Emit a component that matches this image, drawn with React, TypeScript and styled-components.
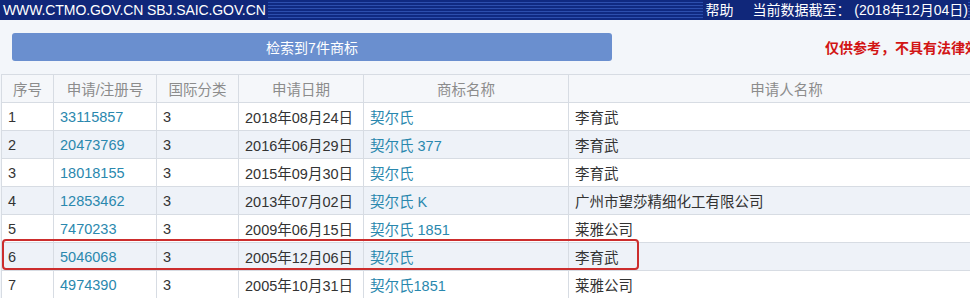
import React from 'react';
import styled, { createGlobalStyle } from 'styled-components';

interface Row {
  no: number;
  regNo: string;
  cls: string;
  date: string;
  mark: string;
  applicant: string;
}

const rows: Row[] = [
  { no: 1, regNo: '33115857', cls: '3', date: '2018年08月24日', mark: '契尔氏', applicant: '李育武' },
  { no: 2, regNo: '20473769', cls: '3', date: '2016年06月29日', mark: '契尔氏 377', applicant: '李育武' },
  { no: 3, regNo: '18018155', cls: '3', date: '2015年09月30日', mark: '契尔氏', applicant: '李育武' },
  { no: 4, regNo: '12853462', cls: '3', date: '2013年07月02日', mark: '契尔氏 K', applicant: '广州市望莎精细化工有限公司' },
  { no: 5, regNo: '7470233', cls: '3', date: '2009年06月15日', mark: '契尔氏 1851', applicant: '莱雅公司' },
  { no: 6, regNo: '5046068', cls: '3', date: '2005年12月06日', mark: '契尔氏', applicant: '李育武' },
  { no: 7, regNo: '4974390', cls: '3', date: '2005年10月31日', mark: '契尔氏1851', applicant: '莱雅公司' },
];

const GlobalStyle = createGlobalStyle`
  body {
    margin: 0;
    background: #f3f6fa;
    overflow: hidden;
    font-family: "Liberation Sans", "Noto Sans CJK SC", sans-serif;
  }
`;

const Page = styled.div`
  width: 970px;
  height: 298px;
  overflow: hidden;
`;

const TopBar = styled.div`
  height: 20px;
  display: flex;
  align-items: center;
  justify-content: space-between;
  white-space: nowrap;
  color: #ffffff;
  font-size: 14px;
  background: repeating-linear-gradient(
    to bottom,
    #0f2a82 0px,
    #0f2a82 2px,
    #2c4fae 2px,
    #2c4fae 3px
  );
`;

const SiteName = styled.span`
  padding-left: 3px;
  padding-right: 2px;
  letter-spacing: -0.1px;
  line-height: 20px;
  background: #10277a;
`;

const Meta = styled.div`
  display: flex;
  gap: 19px;
  font-size: 14px;
  line-height: 20px;
  margin-right: 2px;
  background: #10277a;
  padding-left: 2px;
`;

const Toolbar = styled.div`
  height: 54px;
  display: flex;
  align-items: center;
  padding-left: 12px;
  box-sizing: border-box;
  white-space: nowrap;
`;

const SearchButton = styled.div`
  flex-shrink: 0;
  width: 600px;
  height: 28px;
  border-radius: 3px;
  background: #6a8fcf;
  color: #ffffff;
  font-size: 14px;
  display: flex;
  align-items: center;
  justify-content: center;
`;

const Notice = styled.span`
  flex-shrink: 0;
  margin-left: 213px;
  color: #d21414;
  font-size: 14px;
  font-weight: bold;
`;

const TableWrap = styled.div`
  position: relative;
  margin-left: 1px;
  width: 1003px;
`;

const Table = styled.table`
  width: 1003px;
  border-collapse: collapse;
  table-layout: fixed;
  font-size: 14.5px;
`;

const HeadCell = styled.th`
  height: 27px;
  padding: 0;
  font-weight: normal;
  color: #8c8c8c;
  background: #f5f7fa;
  border: 1px solid #d7dce3;
  text-align: center;
`;

const BodyRow = styled.tr<{ $alt: boolean }>`
  background: ${(p) => (p.$alt ? '#eef2f8' : '#ffffff')};
`;

const Cell = styled.td<{ $link?: boolean }>`
  height: 27px;
  padding: 0 0 0 6px;
  border: 1px solid #d7dce3;
  color: ${(p) => (p.$link ? '#2a88ae' : '#333333')};
  white-space: nowrap;
  overflow: hidden;
`;

const Highlight = styled.div`
  position: absolute;
  left: 1px;
  top: 165px;
  width: 637px;
  height: 31px;
  box-sizing: border-box;
  border: 2.5px solid #cc2d2d;
  border-radius: 4px;
  pointer-events: none;
`;

const cols = [52, 103, 82, 125, 205, 436];

export default function App() {
  return (
    <Page>
      <GlobalStyle />
      <TopBar>
        <SiteName>WWW.CTMO.GOV.CN SBJ.SAIC.GOV.CN</SiteName>
        <Meta>
          <span>帮助</span>
          <span>当前数据截至： (2018年12月04日)</span>
        </Meta>
      </TopBar>
      <Toolbar>
        <SearchButton>检索到7件商标</SearchButton>
        <Notice>仅供参考，不具有法律效力</Notice>
      </Toolbar>
      <TableWrap>
        <Table>
          <colgroup>
            {cols.map((w, i) => (
              <col key={i} style={{ width: w }} />
            ))}
          </colgroup>
          <thead>
            <tr>
              <HeadCell>序号</HeadCell>
              <HeadCell>申请/注册号</HeadCell>
              <HeadCell>国际分类</HeadCell>
              <HeadCell>申请日期</HeadCell>
              <HeadCell>商标名称</HeadCell>
              <HeadCell>申请人名称</HeadCell>
            </tr>
          </thead>
          <tbody>
            {rows.map((r) => (
              <BodyRow key={r.no} $alt={r.no % 2 === 0}>
                <Cell>{r.no}</Cell>
                <Cell $link>{r.regNo}</Cell>
                <Cell>{r.cls}</Cell>
                <Cell>{r.date}</Cell>
                <Cell $link>{r.mark}</Cell>
                <Cell>{r.applicant}</Cell>
              </BodyRow>
            ))}
          </tbody>
        </Table>
        <Highlight />
      </TableWrap>
    </Page>
  );
}
